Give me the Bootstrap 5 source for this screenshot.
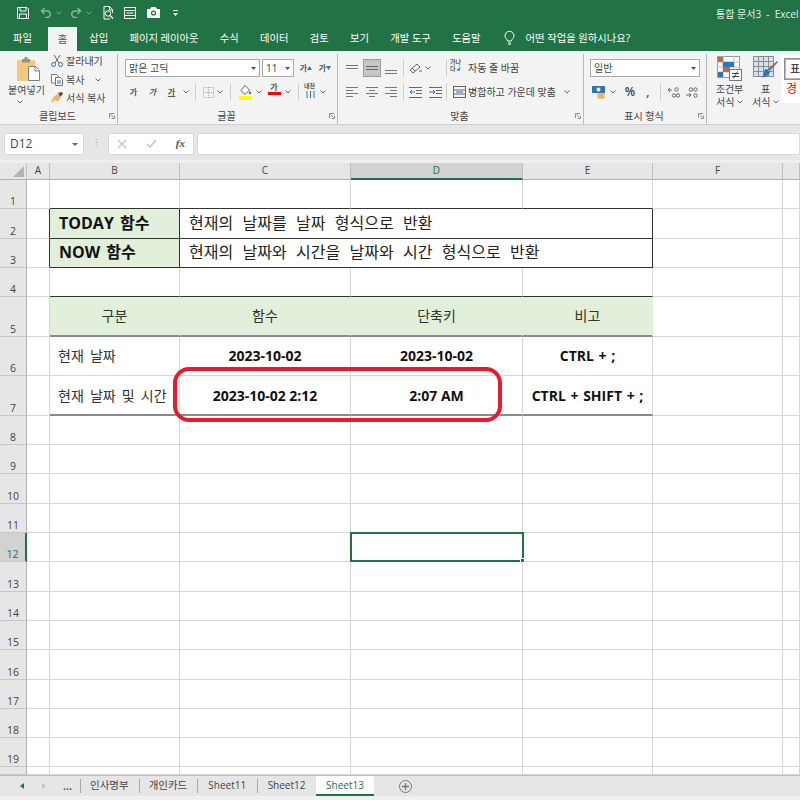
<!DOCTYPE html>
<html lang="ko"><head><meta charset="utf-8"><title>Excel</title>
<link href="https://cdn.jsdelivr.net/npm/bootstrap@5.3.0/dist/css/bootstrap.min.css" rel="stylesheet">
<style>
html,body{height:800px;width:800px;overflow:hidden;margin:0}
body{font-family:"Open Sans","Noto Sans CJK KR",sans-serif;font-size:10px;color:#444;background:#e6e6e6;line-height:1.2}
svg{display:block;flex:none}
.app{width:800px;height:800px}
.xl-title{height:25px;background:#217346;color:#e8f0eb;padding-left:17px}
.titletxt{margin-left:auto;width:84px;white-space:nowrap;overflow:hidden;font-size:10px;padding-top:2px}
.ml4{margin-left:4px}.ml5{margin-left:5px}.ml9{margin-left:9px}.ml10{margin-left:10px}.ml11{margin-left:11px}.ml13{margin-left:13px}
.ml1{margin-left:1px}.ml2{margin-left:2px}.ml3{margin-left:3px}.ml6{margin-left:6px}
.xl-tabs{height:26px;background:#217346;color:#fff;font-size:10.3px}
.xl-tab{margin-left:21.300px;white-space:nowrap}
.xl-tab.first{margin-left:13px}
.xl-tab.on{margin-left:16px;margin-right:-9px;background:#f3f3f3;color:#217346;width:29px;height:24px;margin-top:2px;text-align:center;line-height:24px}
.bulb{margin-left:23px}
.xl-tab.ask{margin-left:11px}
.ribbon{height:74px;background:#f3f3f3;border-bottom:1px solid #cfcfcf;overflow:hidden}
.grp{height:70px;margin-top:3px;border-right:1px solid #b9b9b9;flex:none;display:flex;flex-direction:column}
.g1{width:118px}.g2{width:220px}.g3{width:246px}.g4{width:123px}.g5{flex:1;border-right:0}
.grp-body{flex:1;min-height:0}
.rowa{height:18px;margin-top:5px}.rowb{height:18px;margin-top:6px}
.lab{display:grid;grid-template-columns:1fr auto 1fr;height:16px;align-items:center;padding-right:2px;color:#444;font-size:10px}
.lab svg{justify-self:end}
.tb{display:flex;align-items:center;justify-content:center;flex:none;height:18px}
.w10{width:10px}.w14{width:14px}.w16{width:16px}.w18{width:18px}.w19{width:19px}
.vs{width:1px;height:18px;background:#cfcfcf;flex:none}
.vsa{margin:0 5px 0 4px}.vsb{margin:0 5px}.mx3{margin:0 3px}.vsc{margin:0 2px 0 3px}.vsd{margin-left:13px}
.combo{height:18px;background:#fff;border:1px solid #ababab;padding:0 3px;display:flex;align-items:center;justify-content:space-between;font-size:10px;flex:none}
.cb-font{width:135px;margin-left:7px}.cb-size{width:32px;margin-left:2px}.cb-num{width:110px;margin-left:6px}
.act{background:#c6c6c6;border:1px solid #9c9c9c}
.ga{font-size:8px;font-weight:700;color:#555;line-height:1}
.ga.it{font-style:italic}.ga.un{text-decoration:underline}
.paste{width:53px;padding-top:3px;text-align:center}
.paste svg{margin:0 auto 3px 17px}
.clipl{margin-left:-2px;margin-top:-2px}
.clipr{height:18.500px;gap:3px;white-space:nowrap}
.tinyt{font-size:6px;line-height:6.500px;text-align:left;white-space:nowrap;color:#555;font-weight:700}
.numtxt{font-weight:600;font-size:12px;color:#444}
.stylebig{width:45px;text-align:center;line-height:13px;padding-top:2px;white-space:nowrap}
.stylebig2{width:27px;text-align:center;line-height:13px;padding-top:2px;white-space:nowrap}
.stylebig svg,.stylebig2 svg{margin:0 auto 2px}
.galler{width:20px;height:48px;background:#fff;margin:1px 0 0 2px;padding:3px 0 0 3px;overflow:hidden}
.pyo{width:22px;height:22px;border:2px solid #b5b5b5;outline:1px solid #8f8f8f;outline-offset:-1px;color:#111;font-size:11px;text-align:center;line-height:18px;background:#fff}
.gyeong{color:#f00;font-size:12px;padding-top:2px;padding-left:2px}
.fbar{height:35px;background:#e6e6e6}
.namebox{width:80px;height:22px;margin:8px 0 0 4px;background:#fff;border:1px solid #d9d9d9;padding:0 5px;font-size:12px;color:#444}
.dots{width:24px;height:22px;margin-top:8px;color:#999;font-size:9px;line-height:20px;text-align:center}
.fxbox{width:86px;height:22px;margin-top:8px;background:#fff;border:1px solid #d9d9d9;padding:0 8px}
.fx-t{font-family:"Liberation Serif",serif;font-style:italic;font-weight:700;font-size:11px;color:#555}
.fml{flex:1;height:22px;margin:8px 0 0 3px;background:#fff;border:1px solid #d9d9d9}
.sheetwrap{height:615px;overflow:hidden;background:#fff;position:relative;padding-top:3px;background-image:linear-gradient(#efefef 3px,#fff 3px)}
.sheet{display:grid;grid-template-columns:27px 23px 130px 171px 172px 130px 130px 17px;grid-template-rows:17px 29px 30px 29px 29px 40px 39px 40px 29px 29px 30px 29px 29px 30px 29px 29px 30px 29px 29px 29px 8px;color:#333}
.sheet>div{border-right:1px solid #d6d6d6;border-bottom:1px solid #d6d6d6;min-width:0}
.hd{background:#e6e6e6;border-right-color:#c0c0c0!important;border-bottom-color:#b0b0b0!important;font-size:10px;color:#444;text-align:center;line-height:15px}
.rh{background:#e6e6e6;border-right-color:#b0b0b0!important;border-bottom-color:#c8c8c8!important;font-size:10.500px;color:#444;display:flex;align-items:flex-end;justify-content:center;padding-bottom:2px;line-height:1}
.hd.sel{background:#d2d2d2;color:#217346;border-bottom:2px solid #217346!important}
.rh.sel{background:#d2d2d2;color:#217346;border-right:2px solid #217346!important}
.corner{display:flex;align-items:flex-end;justify-content:flex-end;padding:0 2px 2px 0}
.sheet>div.db{border-bottom-color:#333}.sheet>div.dr{border-right-color:#333}
.sheet>div.tk{border-bottom:2px solid #8a8a8a}
.fill{background:#e2efda}
.sheet>.fill{border-right-color:#e2efda}
.ttl{font-weight:700;font-size:16px;color:#111;display:flex;align-items:center;padding-left:9px;white-space:nowrap;word-spacing:2px}
.desc{font-size:16px;color:#222;display:flex;align-items:center;padding-left:9px;word-spacing:5.200px;grid-column:span 3;white-space:nowrap}
.ctr{font-size:14px;color:#333;display:flex;align-items:center;justify-content:center}
.lft{font-size:14px;color:#333;display:flex;align-items:center;padding:1px 0 0 8px;white-space:nowrap;word-spacing:2.500px}
.bld{font-size:14px;font-weight:700;color:#111;display:flex;align-items:center;justify-content:center;white-space:nowrap;padding-top:1px}
.bld.sp1{word-spacing:1px}
.sheet>div.tk.bld,.sheet>div.tk.lft{padding-top:3px}
.sheet>div.picked{border:2px solid #217346;position:relative;margin:-1px -1px 0 -1px}
.handle{position:absolute;right:-3px;bottom:-3px;width:5px;height:5px;background:#217346;border:1px solid #fff}
.redbox{position:absolute;left:173px;top:207px;width:329px;height:55px;border:4px solid #e61c2e;border-radius:16px;box-shadow:0 0 1px #fff}
.xl-sheets{height:21px;background:#e6e6e6;border-top:1px solid #bdbdbd;color:#444;font-size:10.500px;white-space:nowrap}
.navx{width:80px;padding-left:20px}
.sht{height:14px;line-height:13px;padding:0 10px 0 9px;border-left:1px solid #a9a9a9}
.sht.lat{font-size:10px;padding:0 10.500px 0 10px}
.sht.cur{height:20px;line-height:19px;background:#fff;color:#217346;border:0;border-bottom:2px solid #217346;width:58px;padding:0;text-align:center;font-size:10px;align-self:flex-start}
.plusw{margin-left:25px}
.xl-status{height:4px;background:#f0f0f0}
.redbar{height:3px;width:13px;background:#f00;margin:1px auto 0}
.tri2{margin-left:18px}.dotsg{margin-left:17px;color:#217346;font-weight:700;line-height:1}
</style></head><body>
<div class="app d-flex flex-column">

<div class="xl-title d-flex align-items-center">
 <svg width="12" height="12" viewBox="0 0 12 12" fill="none" stroke="#fff"><path d="M.5.500h9.500l1.500 1.500v9.500H.5z"/><path d="M3 .5v3.500h6V.5M2.500 11.500V7h7v4.500" /></svg>
 <svg class="ml11" width="11" height="11" viewBox="0 0 11 11" fill="none" stroke="#86b59b" stroke-width="1.500"><path d="M4.500 1 1.500 4 4.500 7M2 4h5a3 3 0 0 1 0 6.500H5"/></svg>
 <svg class="ml5" width="6" height="4" viewBox="0 0 6 4" fill="none" stroke="#6fa587"><path d="m.5.500 2.500 2.500L5.500.500"/></svg>
 <svg class="ml9" width="11" height="11" viewBox="0 0 11 11" fill="none" stroke="#86b59b" stroke-width="1.500"><path d="M6.500 1l3 3-3 3M9 4H4a3 3 0 0 0 0 6.500h2"/></svg>
 <svg class="ml4" width="6" height="4" viewBox="0 0 6 4" fill="none" stroke="#6fa587"><path d="m.5.500 2.500 2.500L5.500.500"/></svg>
 <svg class="ml11" width="11" height="14" viewBox="0 0 11 14" fill="none" stroke="#fff"><path d="M7 13H1V.5h5.500l3 3V7M6.500 .5V4h3"/><circle cx="5" cy="7.500" r="2.700"/><path d="m7 9.500 3 3" stroke-width="1.500"/></svg>
 <svg class="ml10" width="12" height="12" viewBox="0 0 12 12" fill="none" stroke="#fff"><rect x=".5" y=".5" width="11" height="11"/><path d="M.5 3.500h11M.5 8.500h11M2.500 6h7"/></svg>
 <svg class="ml11" width="13" height="11" viewBox="0 0 13 11"><path fill="#fff" d="M0 2h3L4.500 0h4L10 2h3v9H0z"/><circle cx="6.500" cy="6" r="2.600" fill="#217346"/><circle cx="6.500" cy="6" r="1.300" fill="#fff"/></svg>
 <svg class="ml13" width="5" height="6" viewBox="0 0 5 6" fill="#fff"><path d="M0 0h5v1H0zM0 3h5L2.500 6z"/></svg>
 <div class="titletxt">통합 문서3&nbsp; -&nbsp; Excel</div>
</div>

<div class="xl-tabs d-flex align-items-center">
 <div class="xl-tab first">파일</div><div class="xl-tab on">홈</div><div class="xl-tab">삽입</div><div class="xl-tab">페이지 레이아웃</div><div class="xl-tab">수식</div><div class="xl-tab">데이터</div><div class="xl-tab">검토</div><div class="xl-tab">보기</div><div class="xl-tab">개발 도구</div><div class="xl-tab">도움말</div>
 <svg class="bulb" width="11" height="14" viewBox="0 0 11 14" fill="none" stroke="#fff"><path d="M3.500 10C3.500 8 1 7.500 1 4.800a4.500 4.500 0 0 1 9 0C10 7.500 7.500 8 7.500 10zM4 12h3M4.500 13.500h2"/></svg>
 <div class="xl-tab ask">어떤 작업을 원하시나요?</div>
</div>

<div class="ribbon d-flex">
 <div class="grp g1">
  <div class="grp-body d-flex">
   <div class="paste">
    <svg width="24" height="24" viewBox="0 0 24 24"><rect x="0" y="3" width="18" height="21" rx="1" fill="#f2c97d"/><path fill="#9a8f80" d="M5 2h2.500V0h3v2H13v3.500H5z"/><path fill="#fff" stroke="#7f7f7f" d="M11.500 9.500h7l4 4v10h-11z"/><path fill="none" stroke="#7f7f7f" d="M18 9.500V14h4.500"/></svg>
    <div>붙여넣기</div>
    <svg class="mt-1" width="6" height="4" viewBox="0 0 6 4" fill="none" stroke="#666"><path d="m.5.500 2.500 2.500L5.500.500"/></svg>
   </div>
   <div class="clipl">
    <div class="d-flex align-items-center clipr"><svg width="12" height="12" viewBox="0 0 12 12" fill="none"><path stroke="#666" d="M3 0l5 8M9 0 4 8"/><circle cx="2.500" cy="9.500" r="2" stroke="#2e75b6"/><circle cx="9.500" cy="9.500" r="2" stroke="#2e75b6"/></svg><span>잘라내기</span></div>
    <div class="d-flex align-items-center clipr"><svg width="12" height="12" viewBox="0 0 12 12" fill="#fff" stroke="#777"><path d="M.5.500h5l1.500 1.500v7H.5z"/><path d="M4.500 3.500h5l2 2v6h-7z"/><path stroke="#2e75b6" d="M6 7h4M6 9h4"/></svg><span>복사</span><svg class="ms-2" width="6" height="4" viewBox="0 0 6 4" fill="none" stroke="#666"><path d="m.5.500 2.500 2.500L5.500.500"/></svg></div>
    <div class="d-flex align-items-center clipr"><svg width="12" height="12" viewBox="0 0 12 12"><path fill="#5a4a3a" d="M7 1l4-1 1 2-3 3z"/><path fill="#e8b964" d="M6 2l4 3.500-3 4-5-1.500 1 3-3-1.500 2-4z"/></svg><span>서식 복사</span></div>
   </div>
  </div>
  <div class="lab"><span></span><span>클립보드</span><svg width="6" height="6" viewBox="0 0 6 6" fill="none" stroke="#777" stroke-width=".8"><path d="M.5 5V.5H5M1.500 1.500l3 3M5.500 2.500v3h-3"/></svg></div>
 </div>

 <div class="grp g2">
  <div class="grp-body">
   <div class="d-flex rowa">
    <div class="combo cb-font"><span>맑은 고딕</span><svg width="5" height="3" viewBox="0 0 5 3" fill="#555"><path d="M0 0h5L2.500 3z"/></svg></div>
    <div class="combo cb-size"><span>11</span><svg width="5" height="3" viewBox="0 0 5 3" fill="#555"><path d="M0 0h5L2.500 3z"/></svg></div>
    <div class="tb w16 ml4 ga">가<svg width="5" height="4" viewBox="0 0 5 4" fill="#2e75b6"><path d="M0 4h5L2.500 0z"/></svg></div>
    <div class="tb w16 ml3 ga">가<svg width="5" height="4" viewBox="0 0 5 4" fill="#2e75b6"><path d="M0 0h5L2.500 4z"/></svg></div>
   </div>
   <div class="d-flex align-items-center rowb ml6">
    <div class="tb w19 ga">가</div><div class="tb w19 ga it">가</div><div class="tb w19 ga un">가</div>
    <div class="tb w10"><svg width="6" height="4" viewBox="0 0 6 4" fill="none" stroke="#666"><path d="m.5.500 2.500 2.500L5.500.500"/></svg></div>
    <div class="vs vsa"></div>
    <div class="tb w14"><svg width="11" height="11" viewBox="0 0 11 11" fill="none" stroke="#aaa" stroke-dasharray="1 1"><rect x=".5" y=".5" width="10" height="10"/><path d="M5.500 0v11M0 5.500h11"/></svg></div>
    <div class="tb w10"><svg width="6" height="4" viewBox="0 0 6 4" fill="none" stroke="#666"><path d="m.5.500 2.500 2.500L5.500.500"/></svg></div>
    <div class="vs vsb"></div>
    <div class="tb w18"><svg width="13" height="15" viewBox="0 0 13 15"><path fill="#fff" stroke="#666" d="M6 .5l4.500 4.500L6 9.500 2 5.500z"/><path fill="#666" d="M11 6c1 1.500 1.500 2 1 3h-2c-.5-1 0-1.500 1-3z"/><rect y="11" width="13" height="4" fill="#ff0"/></svg></div>
    <div class="tb w10"><svg width="6" height="4" viewBox="0 0 6 4" fill="none" stroke="#666"><path d="m.5.500 2.500 2.500L5.500.500"/></svg></div>
    <div class="tb w18 ml1 d-block text-center ga">가<div class="redbar"></div></div>
    <div class="tb w10"><svg width="6" height="4" viewBox="0 0 6 4" fill="none" stroke="#666"><path d="m.5.500 2.500 2.500L5.500.500"/></svg></div>
    <div class="vs vsb"></div>
    <div class="tb w14 d-block">
     <div class="tinyt">내천</div>
     <svg width="13" height="8" viewBox="0 0 13 8" fill="none"><path stroke="#2e75b6" d="M3 1v7M6.500 1v7M10 1v7"/></svg>
    </div>
    <div class="tb w10"><svg width="6" height="4" viewBox="0 0 6 4" fill="none" stroke="#666"><path d="m.5.500 2.500 2.500L5.500.500"/></svg></div>
   </div>
  </div>
  <div class="lab"><span></span><span>글꼴</span><svg width="6" height="6" viewBox="0 0 6 6" fill="none" stroke="#777" stroke-width=".8"><path d="M.5 5V.5H5M1.500 1.500l3 3M5.500 2.500v3h-3"/></svg></div>
 </div>

 <div class="grp g3">
  <div class="grp-body">
   <div class="d-flex align-items-center rowa ml5">
    <div class="tb w18"><svg width="12" height="7" viewBox="0 0 12 7" stroke="#777"><path d="M0 .5h12M0 3.500h12"/></svg></div>
    <div class="tb w18 ml2 act"><svg width="12" height="6" viewBox="0 0 12 6" stroke="#666"><path d="M0 1.500h12M0 4.500h12"/></svg></div>
    <div class="tb w18 ml1"><svg width="12" height="12" viewBox="0 0 12 12" stroke="#777"><path d="M0 8.500h12M0 11.500h12"/></svg></div>
    <div class="vs mx3"></div>
    <div class="tb w16"><svg width="13" height="12" viewBox="0 0 13 12" fill="none" stroke="#666"><path d="M1 8 8 2l3 3-7 6zM3 6l3 3"/><path d="M10 9h3" stroke="#2e75b6"/></svg></div>
    <div class="tb w10"><svg width="6" height="4" viewBox="0 0 6 4" fill="none" stroke="#666"><path d="m.5.500 2.500 2.500L5.500.500"/></svg></div>
    <div class="vs vsd"></div>
    <div class="tb w14 ml3 d-block">
     <div class="tinyt">가나</div><div class="tinyt">다<span class="text-primary">↲</span></div>
    </div>
    <div class="ms-1">자동 줄 바꿈</div>
   </div>
   <div class="d-flex align-items-center rowb ml5">
    <div class="tb w18"><svg width="12" height="10" viewBox="0 0 12 10" stroke="#777"><path d="M0 .5h12M0 3.500h7M0 6.500h12M0 9.500h7"/></svg></div>
    <div class="tb w18 ml2"><svg width="12" height="10" viewBox="0 0 12 10" stroke="#777"><path d="M0 .5h12M3 3.500h6M0 6.500h12M3 9.500h6"/></svg></div>
    <div class="tb w18 ml1"><svg width="12" height="10" viewBox="0 0 12 10" stroke="#777"><path d="M0 .5h12M5 3.500h7M0 6.500h12M5 9.500h7"/></svg></div>
    <div class="vs vsc"></div>
    <div class="tb w18"><svg width="13" height="11" viewBox="0 0 13 11" fill="none"><path stroke="#666" d="M0 .5h13M7 3.500h6M7 6.500h6M0 10.500h13"/><path stroke="#2e75b6" d="M6 5H1m2-2L1 5l2 2"/></svg></div>
    <div class="tb w18 ml2"><svg width="13" height="11" viewBox="0 0 13 11" fill="none"><path stroke="#666" d="M0 .5h13M7 3.500h6M7 6.500h6M0 10.500h13"/><path stroke="#2e75b6" d="M0 5h5M4 3l2 2-2 2"/></svg></div>
    <div class="vs ml2"></div>
    <div class="tb w14 ml5"><svg width="13" height="12" viewBox="0 0 13 12" fill="none" stroke="#666"><rect x=".5" y=".5" width="12" height="11"/><path d="M.5 4h12M.5 8h12"/><path stroke="#2e75b6" d="M3 6h7"/></svg></div>
    <div class="ml2">병합하고 가운데 맞춤</div>
    <svg class="ms-2" width="6" height="4" viewBox="0 0 6 4" fill="none" stroke="#666"><path d="m.5.500 2.500 2.500L5.500.500"/></svg>
   </div>
  </div>
  <div class="lab"><span></span><span>맞춤</span><svg width="6" height="6" viewBox="0 0 6 6" fill="none" stroke="#777" stroke-width=".8"><path d="M.5 5V.5H5M1.500 1.500l3 3M5.500 2.500v3h-3"/></svg></div>
 </div>

 <div class="grp g4">
  <div class="grp-body">
   <div class="d-flex rowa"><div class="combo cb-num"><span>일반</span><svg width="5" height="3" viewBox="0 0 5 3" fill="#555"><path d="M0 0h5L2.500 3z"/></svg></div></div>
   <div class="d-flex align-items-center rowb ms-2">
    <div class="tb w14"><svg width="14" height="13" viewBox="0 0 14 13"><rect width="13" height="7" fill="#2e75b6"/><circle cx="6.500" cy="3.500" r="2" fill="#fff"/><ellipse cx="9" cy="8.500" rx="4" ry="1.800" fill="#e8b964"/><ellipse cx="9" cy="11" rx="4" ry="1.800" fill="#e8b964"/></svg></div>
    <div class="tb w10 ml2"><svg width="6" height="4" viewBox="0 0 6 4" fill="none" stroke="#666"><path d="m.5.500 2.500 2.500L5.500.500"/></svg></div>
    <div class="tb w18 ml3 numtxt">%</div>
    <div class="tb w18 numtxt">,</div>
    <div class="vs ml3"></div>
    <div class="tb w18 ml3"><svg width="13" height="11" viewBox="0 0 13 11" fill="none" stroke="#666"><circle cx="9.500" cy="2.500" r="1.700"/><circle cx="7" cy="8.500" r="1.700"/><circle cx="11" cy="8.500" r="1.700"/><path stroke="#2e75b6" d="M5 3H1m2-2L1 3l2 2"/></svg></div>
    <div class="tb w18 ml1"><svg width="14" height="11" viewBox="0 0 14 11" fill="none" stroke="#666"><circle cx="6" cy="2.500" r="1.700"/><circle cx="10.500" cy="2.500" r="1.700"/><circle cx="10.500" cy="8.500" r="1.700"/><path stroke="#2e75b6" d="M1 8h5M4 6l2 2-2 2"/></svg></div>
   </div>
  </div>
  <div class="lab"><span></span><span>표시 형식</span><svg width="6" height="6" viewBox="0 0 6 6" fill="none" stroke="#777" stroke-width=".8"><path d="M.5 5V.5H5M1.500 1.500l3 3M5.500 2.500v3h-3"/></svg></div>
 </div>

 <div class="grp g5 flex-row">
  <div class="stylebig">
   <svg width="25" height="25" viewBox="0 0 25 25"><rect x=".5" y=".5" width="22" height="21" fill="#fff" stroke="#999"/><path stroke="#bbb" d="M6 0v22M17 0v22M0 6h23M0 11h23M0 16h23"/><path fill="#d5623c" d="M1 1h5v5H1z"/><path fill="#2e75b6" d="M6 6h11v5H6zM1 16h5v5H1z"/><path fill="#d5623c" d="M6 11h7v5H6z"/><rect x="12.500" y="13.500" width="12" height="11" fill="#fff" stroke="#777"/><path stroke="#444" d="M15 17.500h7M15 20.500h7M20.500 15.500l-4 7"/></svg>
   <div>조건부</div><div>서식 <svg class="d-inline" width="6" height="4" viewBox="0 0 6 4" fill="none" stroke="#666"><path d="m.5.500 2.500 2.500L5.500.500"/></svg></div>
  </div>
  <div class="stylebig2">
   <svg width="25" height="25" viewBox="0 0 25 25"><path fill="#d5e2f0" d="M1 1h20v20H1z"/><path stroke="#8a8a8a" fill="none" d="M.5.500h20v20H.500zM5.500 0v21M10.500 0v21M15.500 0v21M0 5.500h21M0 10.500h21M0 15.500h21"/><path fill="#777" d="M24 5l1 1-8 9-2-2z"/><path fill="#2e75b6" d="M14 13l3 3c-1 3-4 6-9 5 3-1 3-3 3-5 0-2 1-3 3-3z"/></svg>
   <div>표</div><div>서식 <svg class="d-inline" width="6" height="4" viewBox="0 0 6 4" fill="none" stroke="#666"><path d="m.5.500 2.500 2.500L5.500.500"/></svg></div>
  </div>
  <div class="galler"><div class="pyo">표</div><div class="gyeong">경</div></div>
 </div>
</div>

<div class="fbar d-flex">
 <div class="namebox d-flex align-items-center justify-content-between"><span>D12</span><svg width="6" height="3" viewBox="0 0 6 3" fill="#666"><path d="M0 0h6L3 3z"/></svg></div>
 <div class="dots">⋮</div>
 <div class="fxbox d-flex align-items-center justify-content-between">
  <svg width="10" height="10" viewBox="0 0 10 10" stroke="#c4c4c4" stroke-width="1.300"><path d="m1 1 8 8M9 1 1 9"/></svg>
  <svg width="11" height="10" viewBox="0 0 11 10" fill="none" stroke="#c4c4c4" stroke-width="1.500"><path d="m1 5 3 3 6-7"/></svg>
  <span class="fx-t">fx</span>
 </div>
 <div class="fml"></div>
</div>

<div class="sheetwrap">
 <div class="sheet">
  <div class="hd corner"><svg width="11" height="11" viewBox="0 0 11 11" fill="#b4b4b4"><path d="M11 0v11H0z"/></svg></div><div class="hd">A</div><div class="hd">B</div><div class="hd">C</div><div class="hd sel">D</div><div class="hd">E</div><div class="hd">F</div><div class="hd"></div>

  <div class="rh">1</div><div></div><div class="db"></div><div class="db"></div><div class="db"></div><div class="db"></div><div></div><div></div>
  <div class="rh">2</div><div class="dr"></div><div class="fill ttl db dr">TODAY 함수</div><div class="desc db dr">현재의 날짜를 날짜 형식으로 반환</div><div></div><div></div>
  <div class="rh">3</div><div class="dr"></div><div class="fill ttl db dr">NOW 함수</div><div class="desc db dr">현재의 날짜와 시간을 날짜와 시간 형식으로 반환</div><div></div><div></div>
  <div class="rh">4</div><div></div><div class="db"></div><div class="db"></div><div class="db"></div><div class="db"></div><div></div><div></div>
  <div class="rh">5</div><div></div><div class="fill ctr tk">구분</div><div class="fill ctr tk">함수</div><div class="fill ctr tk">단축키</div><div class="fill ctr tk">비고</div><div></div><div></div>
  <div class="rh">6</div><div></div><div class="lft">현재 날짜</div><div class="bld">2023-10-02</div><div class="bld">2023-10-02</div><div class="bld sp1">CTRL + ;</div><div></div><div></div>
  <div class="rh">7</div><div></div><div class="lft tk">현재 날짜 및 시간</div><div class="bld tk">2023-10-02 2:12</div><div class="bld tk">2:07 AM</div><div class="bld tk sp1">CTRL + SHIFT + ;</div><div></div><div></div>
  <div class="rh">8</div><div></div><div></div><div></div><div></div><div></div><div></div><div></div>
  <div class="rh">9</div><div></div><div></div><div></div><div></div><div></div><div></div><div></div>
  <div class="rh">10</div><div></div><div></div><div></div><div></div><div></div><div></div><div></div>
  <div class="rh">11</div><div></div><div></div><div></div><div></div><div></div><div></div><div></div>
  <div class="rh sel">12</div><div></div><div></div><div></div><div class="picked"><span class="handle"></span></div><div></div><div></div><div></div>
  <div class="rh">13</div><div></div><div></div><div></div><div></div><div></div><div></div><div></div>
  <div class="rh">14</div><div></div><div></div><div></div><div></div><div></div><div></div><div></div>
  <div class="rh">15</div><div></div><div></div><div></div><div></div><div></div><div></div><div></div>
  <div class="rh">16</div><div></div><div></div><div></div><div></div><div></div><div></div><div></div>
  <div class="rh">17</div><div></div><div></div><div></div><div></div><div></div><div></div><div></div>
  <div class="rh">18</div><div></div><div></div><div></div><div></div><div></div><div></div><div></div>
  <div class="rh">19</div><div></div><div></div><div></div><div></div><div></div><div></div><div></div>
  <div class="rh"></div><div></div><div></div><div></div><div></div><div></div><div></div><div></div>
 </div>
 <div class="redbox"></div>
</div>

<div class="xl-sheets d-flex align-items-center">
 <div class="navx d-flex align-items-center">
  <svg width="4" height="6" viewBox="0 0 4 6" fill="#217346"><path d="M4 0v6L0 3z"/></svg>
  <svg class="tri2" width="4" height="6" viewBox="0 0 4 6" fill="#c4c4c4"><path d="M0 0v6l4-3z"/></svg>
  <span class="dotsg">...</span>
 </div>
 <div class="sht">인사명부</div><div class="sht">개인카드</div><div class="sht lat">Sheet11</div><div class="sht lat">Sheet12</div>
 <div class="sht cur">Sheet13</div>
 <svg class="plusw" width="13" height="13" viewBox="0 0 13 13" fill="none" stroke="#777"><circle cx="6.500" cy="6.500" r="6"/><path d="M6.500 3v7M3 6.500h7" stroke-width="1.300"/></svg>
</div>
<div class="xl-status"></div>
</div>
</body></html>
